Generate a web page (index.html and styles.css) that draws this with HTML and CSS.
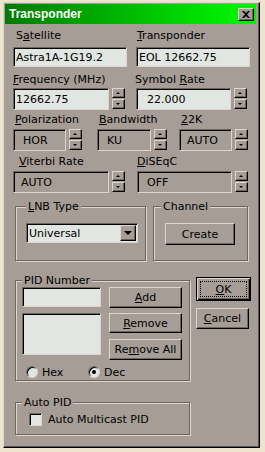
FILE: index.html
```html
<!DOCTYPE html>
<html lang="en">
  <head>
    <meta charset="UTF-8" />
    <title>Transponder</title>
    <link rel="stylesheet" href="styles.css">
  </head>
  <body>
    <div class="window">
      <div class="titlebar">
        <span class="title">Transponder</span>
        <span class="close">
          <svg width="8" height="7" viewBox="0 0 8 7"><path d="M0 0h2l2 2 2-2h2L5 3.5 8 7H6L4 5 2 7H0l3-3.5z" fill="#000"/></svg>
        </span>
      </div>

      <div class="content">
        <div class="row r1">
          <div class="cell c123">
            <div class="label pl3">S<u>a</u>tellite</div>
            <div class="edit w114 h20">Astra1A-1G19.2</div>
          </div>
          <div class="cell">
            <div class="label pl1"><u>T</u>ransponder</div>
            <div class="edit w114 h20">EOL 12662.75</div>
          </div>
        </div>

        <div class="row r2">
          <div class="cell c123">
            <div class="label"><u>F</u>requency (MHz)</div>
            <div class="spinbox">
              <div class="edit w96 h22">12662.75</div>
              <div class="spin"><span class="up"></span><span class="down"></span></div>
            </div>
          </div>
          <div class="cell">
            <div class="label ml-1">Symbol <u>R</u>ate</div>
            <div class="spinbox">
              <div class="edit w95 h22 pl10">22.000</div>
              <div class="spin"><span class="up"></span><span class="down"></span></div>
            </div>
          </div>
        </div>

        <div class="row r3">
          <div class="cell c84">
            <div class="label pl2"><u>P</u>olarization</div>
            <div class="spinbox">
              <div class="edit static w53 h22 pl9">HOR</div>
              <div class="spin"><span class="up"></span><span class="down"></span></div>
            </div>
          </div>
          <div class="cell c82">
            <div class="label pl2"><u>B</u>andwidth</div>
            <div class="spinbox">
              <div class="edit static w54 h22 pl9">KU</div>
              <div class="spin"><span class="up"></span><span class="down"></span></div>
            </div>
          </div>
          <div class="cell">
            <div class="label pl2"><u>2</u>2K</div>
            <div class="spinbox">
              <div class="edit static w53 h22 pl7">AUTO</div>
              <div class="spin"><span class="up"></span><span class="down"></span></div>
            </div>
          </div>
        </div>

        <div class="row r4">
          <div class="cell c124">
            <div class="label pl6"><u>V</u>iterbi Rate</div>
            <div class="spinbox">
              <div class="edit static w96 h22 pl7">AUTO</div>
              <div class="spin"><span class="up"></span><span class="down"></span></div>
            </div>
          </div>
          <div class="cell">
            <div class="label"><u>D</u>iSEqC</div>
            <div class="spinbox">
              <div class="edit static w95 h22 pl9">OFF</div>
              <div class="spin"><span class="up"></span><span class="down"></span></div>
            </div>
          </div>
        </div>

        <div class="groups">
          <fieldset class="group lnb">
            <legend class="lg10"><u>L</u>NB Type</legend>
            <div class="lnb-inner">
              <div class="edit combo">
                <span class="combo-text">Universal</span>
                <span class="drop"></span>
              </div>
            </div>
          </fieldset>
          <fieldset class="group channel">
            <legend class="lg7">Channel</legend>
            <div class="channel-inner">
              <div class="btn create">Create</div>
            </div>
          </fieldset>
        </div>

        <div class="bottom">
          <div class="left">
            <fieldset class="group pid">
              <legend class="lg6">PID Number</legend>
              <div class="pid-inner">
                <div class="pid-fields">
                  <div class="edit pid-edit"></div>
                  <div class="edit pid-list"></div>
                </div>
                <div class="pid-buttons">
                  <div class="btn add"><span><u>A</u>dd</span></div>
                  <div class="btn remove"><span><u>R</u>emove</span></div>
                  <div class="btn removeall"><span>Re<u>m</u>ove All</span></div>
                </div>
              </div>
              <div class="radios">
                <div class="radio-item hex"><span class="radio"></span>Hex</div>
                <div class="radio-item"><span class="radio checked"></span>Dec</div>
              </div>
            </fieldset>

            <fieldset class="group auto">
              <legend class="lg6">Auto PID</legend>
              <div class="auto-inner">
                <span class="check"></span>Auto Multicast PID
              </div>
            </fieldset>
          </div>

          <div class="right">
            <div class="btn default"><span class="focus"><u>O</u>K</span></div>
            <div class="btn cancel"><span><u>C</u>ancel</span></div>
          </div>
        </div>
      </div>
    </div>
  </body>
</html>
```

FILE: styles.css
```css
body {
  margin: 0;
  padding: 2px 0 0 3px;
  background: #ece4cc;
  font-family: "DejaVu Sans", Verdana, sans-serif;
  font-size: 11px;
  line-height: 13px;
  color: #000;
}

.window {
  width: 257px;
  height: 446px;
  box-sizing: border-box;
  background: #a69d96;
  border: 1px solid;
  border-color: #ddd6d0 #000 #000 #ddd6d0;
  box-shadow: inset -1px -1px #5e5650;
}

.titlebar {
  height: 20px;
  margin: 1px 3px 0 1px;
  padding: 0 2px 0 4px;
  display: flex;
  align-items: center;
  justify-content: space-between;
  background: linear-gradient(to right, #007a00, #00f000 90%);
}

.title {
  color: #fff;
  font-family: "Liberation Sans", Arial, sans-serif;
  font-weight: bold;
  font-size: 12px;
}

.close {
  width: 16px;
  height: 13px;
  box-sizing: border-box;
  background: #a69d96;
  border: 1px solid;
  border-color: #ddd6d0 #000 #000 #ddd6d0;
  box-shadow: inset -1px -1px #6e655e;
  display: flex;
  align-items: center;
  justify-content: center;
}

.content {
  padding: 5px 0 0 9px;
}

.row {
  display: flex;
}

.cell .label {
  height: 13px;
  white-space: nowrap;
}

.r1 .label { margin-bottom: 5px; }
.r2 { margin-top: 6px; }
.r2 .label { margin-bottom: 2px; }
.r3 { margin-top: 3px; }
.r3 .label { margin-bottom: 3px; }
.r4 { margin-top: 4px; }
.r4 .label { margin-bottom: 3px; }

.c123 { width: 123px; }
.c124 { width: 124px; }
.c84 { width: 84px; }
.c82 { width: 82px; }

.pl1 { padding-left: 1px; }
.pl2 { padding-left: 2px; }
.pl3 { padding-left: 3px; }
.pl6 { padding-left: 6px; }
.ml-1 { margin-left: -1px; }

.edit {
  box-sizing: border-box;
  background: #e2e6e2;
  border: 1px solid;
  border-color: #6e655e #ddd6d0 #ddd6d0 #6e655e;
  box-shadow: inset 1px 1px #000;
  padding-left: 2px;
  display: flex;
  align-items: center;
  white-space: nowrap;
}

.edit.static {
  background: #a69d96;
}

.edit.pl7 { padding-left: 7px; }
.edit.pl9 { padding-left: 9px; }
.edit.pl10 { padding-left: 10px; }

.w114 { width: 114px; }
.w96 { width: 96px; }
.w95 { width: 95px; }
.w54 { width: 54px; }
.w53 { width: 53px; }
.h20 { height: 20px; }
.h22 { height: 22px; }

.spinbox {
  display: flex;
  gap: 3px;
}

.spin {
  display: flex;
  flex-direction: column;
  gap: 1px;
}

.spin span {
  width: 13px;
  height: 10px;
  box-sizing: border-box;
  background: #a69d96;
  border: 1px solid;
  border-color: #ddd6d0 #000 #000 #ddd6d0;
  box-shadow: inset -1px -1px #6e655e;
  display: flex;
  align-items: center;
  justify-content: center;
}

.spin .up::after {
  content: "";
  border-left: 2px solid transparent;
  border-right: 2px solid transparent;
  border-bottom: 2px solid #000;
  margin-right: 1px;
}

.spin .down::after {
  content: "";
  border-left: 2px solid transparent;
  border-right: 2px solid transparent;
  border-top: 2px solid #000;
  margin-right: 1px;
}

.group {
  box-sizing: border-box;
  margin: 0;
  padding: 0;
  min-width: 0;
  border: 1px solid #6e655e;
  box-shadow: inset 1px 1px #ddd6d0, 1px 1px #ddd6d0;
}

.group legend {
  padding: 0 2px;
  line-height: 13px;
  background: #a69d96;
}

.lg10 { margin-left: 10px; }
.lg7 { margin-left: 7px; }
.lg6 { margin-left: 6px; }

.groups {
  display: flex;
  gap: 7px;
  margin: 7px 0 0 2px;
}

.lnb { width: 131px; }
.channel { width: 95px; }

.lnb-inner {
  padding: 10px 0 17px 10px;
}

.combo {
  width: 112px;
  height: 20px;
  padding-right: 1px;
}

.combo-text {
  flex: 1;
}

.drop {
  width: 16px;
  height: 16px;
  box-sizing: border-box;
  background: #a69d96;
  border: 1px solid;
  border-color: #ddd6d0 #000 #000 #ddd6d0;
  box-shadow: inset -1px -1px #6e655e;
  display: flex;
  align-items: center;
  justify-content: center;
}

.drop::after {
  content: "";
  border-left: 4px solid transparent;
  border-right: 4px solid transparent;
  border-top: 4px solid #000;
}

.channel-inner {
  padding: 10px 0 0 11px;
}

.btn {
  box-sizing: border-box;
  background: #a69d96;
  border: 1px solid;
  border-color: #ddd6d0 #000 #000 #ddd6d0;
  box-shadow: inset -1px -1px #6e655e;
  display: flex;
  align-items: center;
  justify-content: center;
  white-space: nowrap;
}

.create {
  width: 70px;
  height: 22px;
}

.bottom {
  display: flex;
  margin: 13px 0 0 2px;
}

.left {
  width: 175px;
}

.pid-inner {
  display: flex;
  gap: 8px;
  padding-left: 6px;
}

.pid-fields {
  width: 79px;
}

.pid-edit {
  height: 20px;
}

.pid-list {
  height: 42px;
  margin-top: 6px;
}

.pid-buttons {
  width: 73px;
}

.add { height: 21px; }
.remove { height: 20px; margin-top: 5px; }
.removeall { height: 21px; margin-top: 6px; }

.radios {
  display: flex;
  height: 12px;
  margin-top: 6px;
  padding: 0 0 2px 10px;
}

.radio-item {
  display: flex;
  align-items: center;
  gap: 4px;
}

.radio-item.hex {
  width: 62px;
}

.radio {
  width: 12px;
  height: 12px;
  box-sizing: border-box;
  border-radius: 50%;
  background: #e2e6e2;
  border: 1px solid;
  border-color: #6e655e #ddd6d0 #ddd6d0 #6e655e;
  box-shadow: inset 1px 1px #000;
  display: flex;
  align-items: center;
  justify-content: center;
}

.radio.checked::after {
  content: "";
  width: 4px;
  height: 4px;
  border-radius: 50%;
  background: #000;
}

.auto {
  margin-top: 15px;
}

.auto-inner {
  display: flex;
  align-items: center;
  gap: 6px;
  padding: 4px 0 8px 13px;
}

.check {
  width: 13px;
  height: 13px;
  box-sizing: border-box;
  background: #e2e6e2;
  border: 1px solid;
  border-color: #6e655e #ddd6d0 #ddd6d0 #6e655e;
  box-shadow: inset 1px 1px #000;
}

.right {
  margin-left: 6px;
  padding-top: 3px;
}

.btn.default {
  width: 55px;
  height: 24px;
  padding: 3px;
  border: 1px solid #000;
  box-shadow: inset 1px 1px #ddd6d0, inset -1px -1px #000, inset -2px -2px #6e655e;
}

.focus {
  flex: 1;
  align-self: stretch;
  border: 1px dotted #000;
  display: flex;
  align-items: center;
  justify-content: center;
}

.cancel {
  width: 53px;
  height: 21px;
  margin-top: 7px;
}
```
